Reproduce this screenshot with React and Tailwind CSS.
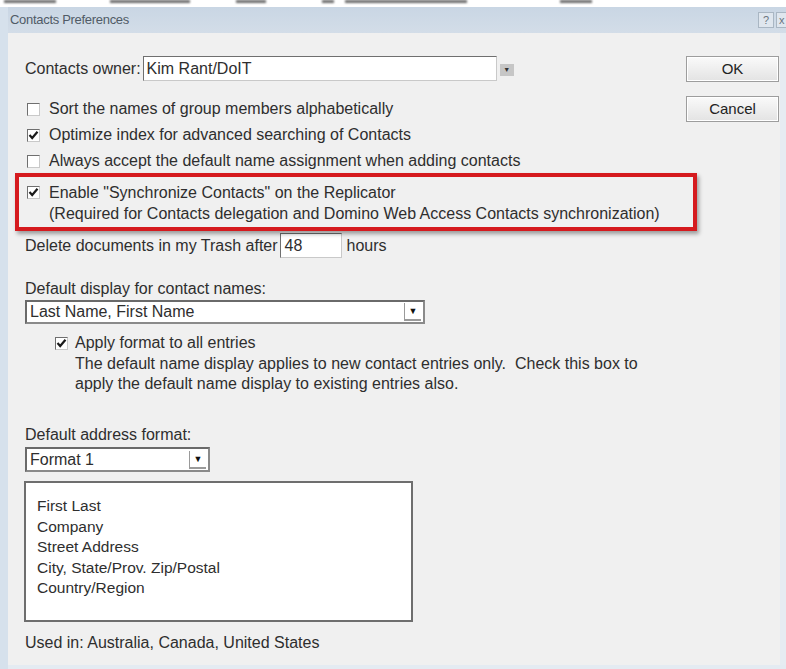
import { useState } from 'react'

const sunken =
  'border border-t-[#6f6f6f] border-l-[#6f6f6f] border-r-[#c9c9c9] border-b-[#c9c9c9] bg-white'

function CheckBox({ checked, onChange }) {
  return (
    <button
      type="button"
      onClick={onChange}
      className={`flex h-[13px] w-[13px] shrink-0 items-center justify-center ${sunken}`}
    >
      {checked && (
        <svg width="11" height="11" viewBox="0 0 11 11">
          <path d="M1.5 5 L4.2 8 L9.5 1.8" fill="none" stroke="#1b1b1b" strokeWidth="2.2" />
        </svg>
      )}
    </button>
  )
}

function OptionRow({ checked, onToggle, children, className = '' }) {
  return (
    <div className={`flex h-[26px] items-center ${className}`}>
      <CheckBox checked={checked} onChange={onToggle} />
      <span className="ml-[9px] whitespace-nowrap">{children}</span>
    </div>
  )
}

function Select({ value, className }) {
  return (
    <div
      className={`flex items-center border-2 border-t-[#6a6a6a] border-l-[#6a6a6a] border-r-[#8a8a8a] border-b-[#8a8a8a] bg-white ${className}`}
    >
      <span className="flex-1 whitespace-nowrap pl-[3px]">{value}</span>
      <span className="mr-[2px] flex h-[18px] w-[17px] items-center justify-center border-b-2 border-l border-[#9a9a9a] text-[9px] text-[#111]">
        ▼
      </span>
    </div>
  )
}

function DialogButton({ children }) {
  return (
    <button
      type="button"
      className="h-[26px] w-[93px] border border-[#9d9d9d] bg-gradient-to-b from-[#fafafa] to-[#e3e3e3] text-[15px] text-[#222] shadow-[inset_0_0_0_1px_#fff]"
    >
      {children}
    </button>
  )
}

// smudged toolbar labels of the window behind, only their lower edge shows
const menuBits = [
  { left: 4, width: 52 },
  { left: 110, width: 80 },
  { left: 236, width: 30 },
  { left: 322, width: 12 },
  { left: 345, width: 122 },
  { left: 560, width: 32 },
]

export default function App() {
  const [opts, setOpts] = useState({
    sort: false,
    optimize: true,
    always: false,
    sync: true,
    apply: true,
  })
  const toggle = (key) => setOpts((prev) => ({ ...prev, [key]: !prev[key] }))

  return (
    <div className="h-[669px] w-[786px] overflow-hidden bg-white font-['Liberation_Sans',Arial,sans-serif] text-[16px] leading-[20px] text-[#2e2e2e]">
      <div className="relative h-[7px] overflow-hidden bg-white">
        {menuBits.map((bit) => (
          <span
            key={bit.left}
            className="absolute top-0 h-[3px] bg-[#6b6b6b] blur-[0.8px]"
            style={{ left: bit.left, width: bit.width }}
          />
        ))}
      </div>

      <div className="flex h-[662px] flex-col border-l-[8px] border-[#d6e1ec]">
        {/* title bar */}
        <div className="flex h-[26px] items-center bg-gradient-to-b from-[#c9d6e4] to-[#d3dde8]">
          <span className="flex-1 pl-[2px] text-[13px] tracking-[-0.3px] text-[#505b66]">
            Contacts Preferences
          </span>
          <span className="flex h-[16px] w-[16px] items-center justify-center border border-[#a9b6c3] bg-[#dfe6ee] text-[11px] text-[#6a7580]">
            ?
          </span>
          <span className="ml-[2px] flex h-[16px] w-[10px] items-center justify-start overflow-hidden border border-r-0 border-[#a9b6c3] bg-[#dfe6ee] pl-[2px] text-[11px] text-[#6a7580]">
            x
          </span>
        </div>

        {/* dialog body */}
        <div className="flex flex-1 border-r-[6px] border-[#e6ecf2] bg-[#f0f0f0]">
          <div className="min-w-0 flex-1 pl-[17px]">
            <div className="mt-[23px] flex items-center">
              <span className="whitespace-nowrap">Contacts owner:</span>
              <div className={`ml-[2px] flex h-[25px] w-[354px] items-center pl-[3px] ${sunken}`}>
                Kim Rant/DoIT
              </div>
              <span className="ml-[3px] mt-[3px] flex h-[12px] w-[14px] items-center justify-center bg-[#c6c6c6] text-[7px] text-[#333]">
                ▼
              </span>
            </div>

            <div className="mt-[15px] pl-[2px]">
              <OptionRow checked={opts.sort} onToggle={() => toggle('sort')}>
                Sort the names of group members alphabetically
              </OptionRow>
              <OptionRow checked={opts.optimize} onToggle={() => toggle('optimize')}>
                Optimize index for advanced searching of Contacts
              </OptionRow>
              <OptionRow checked={opts.always} onToggle={() => toggle('always')}>
                Always accept the default name assignment when adding contacts
              </OptionRow>
            </div>

            <div className="relative ml-[-10px] mt-[-1px] w-[682px] border-[4px] border-[#d51a1e] pb-[3px] pl-[8px] pt-[5px] shadow-[2px_3px_4px_rgba(0,0,0,0.35)]">
              <div className="flex h-[21px] items-center">
                <CheckBox checked={opts.sync} onChange={() => toggle('sync')} />
                <span className="ml-[9px] whitespace-nowrap">
                  Enable "Synchronize Contacts" on the Replicator
                </span>
              </div>
              <div className="flex h-[21px] items-center whitespace-nowrap pl-[22px]">
                (Required for Contacts delegation and Domino Web Access Contacts synchronization)
              </div>
            </div>

            <div className="mt-[2px] flex items-center">
              <span className="whitespace-nowrap">Delete documents in my Trash after</span>
              <div className={`ml-[2px] flex h-[25px] w-[62px] items-center pl-[4px] ${sunken}`}>
                48
              </div>
              <span className="ml-[5px]">hours</span>
            </div>

            <div className="mt-[21px]">Default display for contact names:</div>
            <Select value="Last Name, First Name" className="mt-[1px] h-[24px] w-[400px]" />

            <div className="ml-[30px] mt-[8px]">
              <div className="flex h-[22px] items-center">
                <CheckBox checked={opts.apply} onChange={() => toggle('apply')} />
                <span className="ml-[7px]">Apply format to all entries</span>
              </div>
              <p className="ml-[20px] whitespace-pre leading-[20px]">
                {'The default name display applies to new contact entries only.  Check this box to\napply the default name display to existing entries also.'}
              </p>
            </div>

            <div className="mt-[31px]">Default address format:</div>
            <Select value="Format 1" className="mt-[2px] h-[25px] w-[185px]" />

            <div className="ml-[-1px] mt-[9px] h-[141px] w-[389px] border-2 border-[#6e6e6e] bg-white pl-[11px] pt-[13px] text-[15.5px] leading-[20.5px]">
              <div>First Last</div>
              <div>Company</div>
              <div>Street Address</div>
              <div>City, State/Prov. Zip/Postal</div>
              <div>Country/Region</div>
            </div>

            <div className="mt-[11px]">Used in: Australia, Canada, United States</div>
          </div>

          <div className="flex w-[93px] shrink-0 flex-col gap-[14px] pt-[23px]">
            <DialogButton>OK</DialogButton>
            <DialogButton>Cancel</DialogButton>
          </div>
          <div className="w-[1px] shrink-0" />
        </div>

        <div className="h-[4px] bg-[#e4ebf2]" />
      </div>
    </div>
  )
}
